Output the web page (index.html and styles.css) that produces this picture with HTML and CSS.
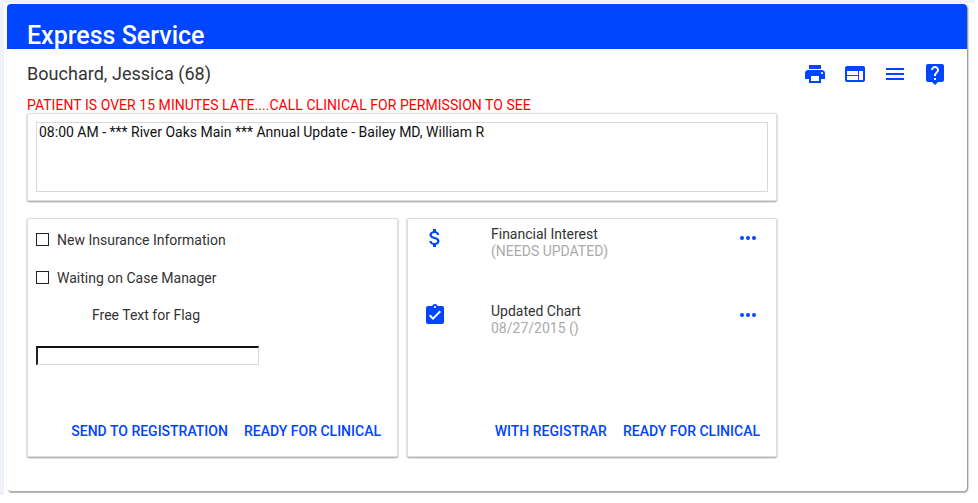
FILE: index.html
```html
<!DOCTYPE html>
<html lang="en">
<head>
<meta charset="utf-8">
<title>Express Service</title>
<link rel="stylesheet" href="styles.css">
</head>
<body>
<main class="panel">
  <header class="panel-head"><h1>Express Service</h1></header>
  <div class="panel-body">
    <div class="patient-row">
      <div class="patient">Bouchard, Jessica (68)</div>
      <div class="tools">
        <svg class="icon" viewBox="0 0 24 24"><path d="M19 8H5c-1.66 0-3 1.34-3 3v6h4v4h12v-4h4v-6c0-1.66-1.34-3-3-3zm-3 11H8v-5h8v5zm3-7c-.55 0-1-.45-1-1s.45-1 1-1 1 .45 1 1-.45 1-1 1zm-1-9H6v4h12V3z"/></svg>
        <svg class="icon" viewBox="0 0 24 24"><path d="M20 4H4c-1.1 0-2 .9-2 2v12c0 1.1.9 2 2 2h16c1.1 0 2-.9 2-2V6c0-1.1-.9-2-2-2zm-5 14H4v-4h11v4zm0-5H4V9h11v4zm5 5h-4V9h4v9z"/></svg>
        <svg class="icon" viewBox="0 0 24 24"><path d="M3 18h18v-2H3v2zm0-5h18v-2H3v2zm0-7v2h18V6H3z"/></svg>
        <svg class="icon" viewBox="0 0 24 24"><path d="M19 2H5c-1.11 0-2 .9-2 2v14c0 1.1.89 2 2 2h4l3 3 3-3h4c1.1 0 2-.9 2-2V4c0-1.1-.9-2-2-2zm-6 16h-2v-2h2v2zm2.07-7.75-.9.92C13.45 11.9 13 12.5 13 14h-2v-.5c0-1.1.45-2.1 1.17-2.83l1.24-1.26c.37-.36.59-.86.59-1.41 0-1.1-.9-2-2-2s-2 .9-2 2H8c0-2.21 1.79-4 4-4s4 1.79 4 4c0 .88-.36 1.68-.93 2.25z"/></svg>
      </div>
    </div>
    <p class="alert">PATIENT IS OVER 15 MINUTES LATE....CALL CLINICAL FOR PERMISSION TO SEE</p>
    <section class="card appt-card">
      <div class="appt-box">08:00 AM - *** River Oaks Main *** Annual Update - Bailey MD, William R</div>
    </section>
    <div class="columns">
      <section class="card flags">
        <label class="check"><span class="box"></span>New Insurance Information</label>
        <label class="check second"><span class="box"></span>Waiting on Case Manager</label>
        <div class="free-label">Free Text for Flag</div>
        <input class="free-input" type="text" aria-label="Free Text for Flag">
        <div class="actions">
          <a class="action">SEND TO REGISTRATION</a>
          <a class="action">READY FOR CLINICAL</a>
        </div>
      </section>
      <section class="card status">
        <div class="status-row">
          <svg class="status-icon" viewBox="0 0 24 24"><path d="M11.8 10.9c-2.27-.59-3-1.2-3-2.15 0-1.09 1.01-1.85 2.7-1.85 1.78 0 2.44.85 2.5 2.1h2.21c-.07-1.72-1.12-3.3-3.21-3.81V3h-3v2.16c-1.94.42-3.5 1.68-3.5 3.61 0 2.31 1.91 3.46 4.7 4.13 2.5.6 3 1.48 3 2.41 0 .69-.49 1.79-2.7 1.79-2.06 0-2.87-.92-2.98-2.1h-2.2c.12 2.19 1.76 3.42 3.68 3.83V21h3v-2.15c1.95-.37 3.5-1.5 3.5-3.55 0-2.84-2.43-3.81-4.7-4.4z"/></svg>
          <div class="status-text">
            <div class="status-title">Financial Interest</div>
            <div class="status-sub">(NEEDS UPDATED)</div>
          </div>
          <div class="more"><i></i><i></i><i></i></div>
        </div>
        <div class="status-row">
          <svg class="status-icon" viewBox="0 0 24 24"><path d="M19 3h-4.18C14.4 1.84 13.3 1 12 1c-1.3 0-2.4.84-2.82 2H5c-1.1 0-2 .9-2 2v14c0 1.1.9 2 2 2h14c1.1 0 2-.9 2-2V5c0-1.1-.9-2-2-2zm-7 0c.55 0 1 .45 1 1s-.45 1-1 1-1-.45-1-1 .45-1 1-1zm-2 14-4-4 1.41-1.41L10 14.17l6.59-6.59L18 9l-8 8z"/></svg>
          <div class="status-text">
            <div class="status-title">Updated Chart</div>
            <div class="status-sub">08/27/2015 ()</div>
          </div>
          <div class="more"><i></i><i></i><i></i></div>
        </div>
        <div class="actions">
          <a class="action">WITH REGISTRAR</a>
          <a class="action">READY FOR CLINICAL</a>
        </div>
      </section>
    </div>
  </div>
</main>
</body>
</html>
```
FILE: styles.css
```css
* { box-sizing: border-box; }
html, body { margin: 0; height: 503px; overflow: hidden; }
body {
  background:
    linear-gradient(#eef3fb, #eef3fb) 0 0 / 4px 495px no-repeat,
    linear-gradient(#eef1f8, #eef1f8) 0 0 / 975px 3px no-repeat,
    #fff;
  font-family: Roboto, "Liberation Sans", sans-serif;
  color: #333;
}
.panel {
  width: 960px;
  height: 487px;
  margin: 4px 0 0 7px;
  background: #fff;
  border-radius: 4px;
  box-shadow: 1px 2px 1px rgba(0,0,0,.3), 3px 0 1px -1px rgba(0,0,0,.12), 0 0 3px rgba(0,0,0,.08);
}
.panel-head {
  height: 45px;
  background: #0045ff;
  border-radius: 4px 4px 0 0;
  padding: 15px 20px 0;
  overflow: hidden;
}
.panel-head h1 {
  margin: 0;
  color: #fff;
  font-size: 25px;
  font-weight: 500;
  line-height: 33px;
}
.panel-body { padding: 0 20px; }
.patient-row {
  display: flex;
  justify-content: space-between;
  height: 47px;
  padding-top: 12px;
}
.patient { font-size: 18px; line-height: 26px; letter-spacing: .03px; color: #333; }
.tools { display: flex; gap: 16px; padding-top: 1px; }
.icon { width: 24px; height: 24px; fill: #0045ff; }
.alert {
  margin: 0;
  height: 17px;
  font-size: 14px;
  line-height: 19px;
  letter-spacing: .04px;
  color: #ff0000;
}
.card {
  background: #fff;
  border: 1px solid #dedede;
  border-radius: 2px;
  box-shadow: 0 1px 2px rgba(0,0,0,.4);
}
.appt-card { width: 750px; height: 88px; padding: 8px 8px; }
.appt-box {
  height: 70px;
  border: 1px solid #d8d8d8;
  padding: 0 2px;
  font-size: 14px;
  line-height: 18px;
  color: #111;
}
.columns { display: flex; gap: 9px; margin-top: 17px; width: 750px; }
.flags, .status { position: relative; height: 239px; font-size: 14px; }
.flags { width: 371px; padding: 13px 8px 0; }
.status { width: 370px; padding: 7px 0 0 18px; }
.check { display: flex; align-items: center; height: 16px; line-height: 16px; color: #333; }
.second { margin-top: 22px; }
.box {
  width: 13px;
  height: 13px;
  border: 1px solid #222;
  margin-right: 8px;
  position: relative;
  top: -1px;
}
.free-label { margin: 21px 0 0 56px; line-height: 16px; color: #333; }
.free-input {
  display: block;
  width: 223px;
  height: 19px;
  margin-top: 23px;
  padding: 0;
  border-style: solid;
  border-width: 2px 1px 1px 2px;
  border-color: #111 #d8d8d8 #d8d8d8 #222;
  background: #fff;
}
.actions {
  position: absolute;
  right: 16px;
  bottom: 17px;
  display: flex;
  gap: 16px;
  line-height: 16px;
  font-weight: 500;
  color: #0045ff;
}
.status-row {
  display: grid;
  grid-template-columns: 65px 1fr 36px;
  height: 77px;
}
.status-icon { width: 24px; height: 24px; margin-left: -3px; fill: #0045ff; }
.status-title { line-height: 17px; color: #333; }
.status-sub { line-height: 17px; color: #aaa; }
.more { display: flex; gap: 2px; padding-top: 10px; height: 14px; box-sizing: content-box; }
.more i { width: 4px; height: 4px; border-radius: 50%; background: #0045ff; }
```
